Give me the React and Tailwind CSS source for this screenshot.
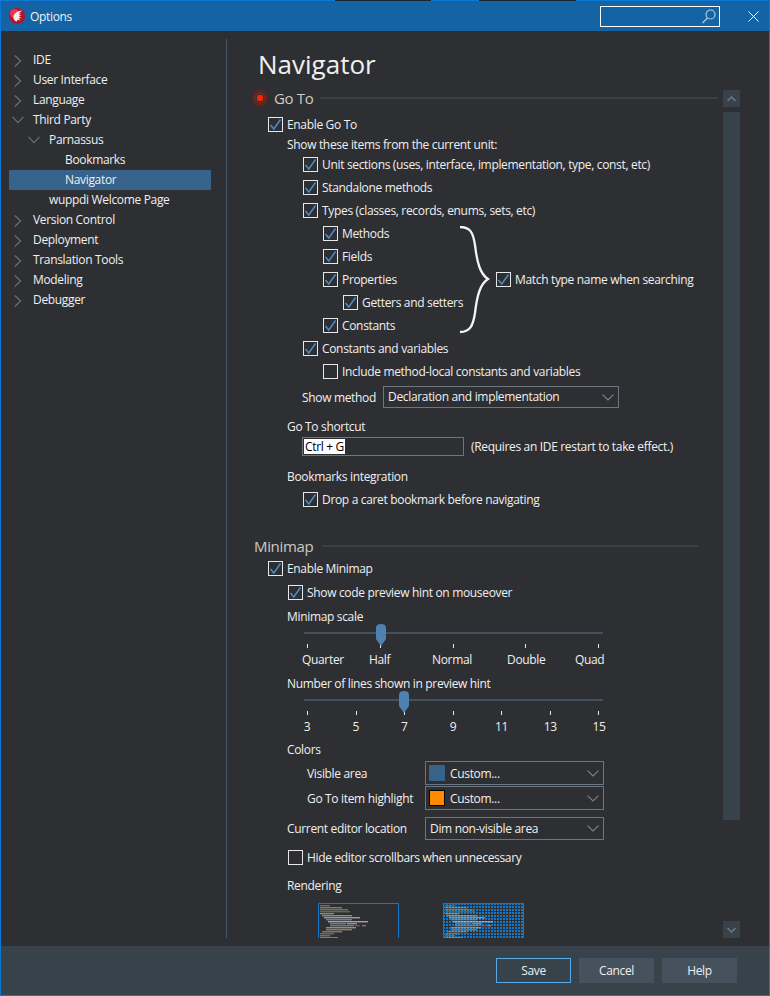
const treeItems = [
  { label: 'IDE', level: 0, arrow: 'right' },
  { label: 'User Interface', level: 0, arrow: 'right' },
  { label: 'Language', level: 0, arrow: 'right' },
  { label: 'Third Party', level: 0, arrow: 'down' },
  { label: 'Parnassus', level: 1, arrow: 'down' },
  { label: 'Bookmarks', level: 2 },
  { label: 'Navigator', level: 2, selected: true },
  { label: 'wuppdi Welcome Page', level: 1 },
  { label: 'Version Control', level: 0, arrow: 'right' },
  { label: 'Deployment', level: 0, arrow: 'right' },
  { label: 'Translation Tools', level: 0, arrow: 'right' },
  { label: 'Modeling', level: 0, arrow: 'right' },
  { label: 'Debugger', level: 0, arrow: 'right' },
];

const levelPad = ['pl-[24px]', 'pl-[40px]', 'pl-[56px]'];
const arrowLeft = ['left-[3px]', 'left-[19px]'];

// x, y, width, colour of the tiny code lines in the two previews
const codeLines = [
  [1, 1, 10, '#8f8f80'], [1, 3, 22, '#a8a898'], [1, 5, 28, '#8f9f6a'], [1, 7, 30, '#7f8f5a'],
  [1, 9, 14, '#b8b8a8'], [3, 11, 30, '#c0c0b0'], [5, 13, 36, '#d6d6d0'], [7, 15, 26, '#7fb0d0'],
  [9, 17, 40, '#e0e0e0'], [11, 19, 16, '#7fb0d0'], [28, 19, 10, '#c8c8c8'], [11, 21, 24, '#b09a80'],
  [36, 21, 5, '#c04a80'], [43, 21, 4, '#a8a8a8'], [7, 23, 30, '#d0c0a0'], [7, 25, 26, '#b8a888'],
  [3, 27, 20, '#a8a898'], [1, 29, 14, '#8f8f80'], [1, 31, 10, '#90a070'], [1, 33, 18, '#a8a898'],
];

function Chevron({ dir, className }) {
  if (dir === 'down') {
    return (
      <svg width="12" height="8" viewBox="0 0 12 8" className={className} fill="none" stroke="#6b6e72" strokeWidth="1.2">
        <path d="M0.5 0.8 L6 6.6 L11.5 0.8" />
      </svg>
    );
  }
  return (
    <svg width="8" height="12" viewBox="0 0 8 12" className={className} fill="none" stroke="#6b6e72" strokeWidth="1.2">
      <path d="M0.8 0.5 L6.6 6 L0.8 11.5" />
    </svg>
  );
}

function TreeRow({ item }) {
  return (
    <div className={`relative flex h-5 items-center ${levelPad[item.level]} ${item.selected ? 'bg-[#36628c]' : ''}`}>
      {item.arrow === 'right' && <Chevron dir="right" className="absolute left-[5px] top-[5px]" />}
      {item.arrow === 'down' && <Chevron dir="down" className={`absolute top-[6px] ${arrowLeft[item.level]}`} />}
      <span>{item.label}</span>
    </div>
  );
}

function Check({ label, checked = true, className = '' }) {
  return (
    <div className={`flex h-[23px] items-start ${className}`}>
      <div className="mt-[4px] flex h-[15px] w-[15px] shrink-0 items-center justify-center border border-[#e8e8e8]">
        {checked && (
          <svg width="13" height="13" viewBox="0 0 13 13" fill="none" stroke="#4f8ec9" strokeWidth="1.4">
            <path d="M1.5 7 L4.8 11 L11.5 1.5" />
          </svg>
        )}
      </div>
      <span className="ml-[4px] mt-[4px] whitespace-nowrap leading-[16px]">{label}</span>
    </div>
  );
}

function Label({ children, className = '' }) {
  return <div className={`h-[18px] pt-px leading-[18px] ${className}`}>{children}</div>;
}

function Combo({ children, className = '' }) {
  return (
    <div className={`flex items-center justify-between border border-[#6b7680] ${className}`}>
      <div className="flex items-center">{children}</div>
      <svg width="12" height="7" viewBox="0 0 12 7" className="mr-[4px]" fill="none" stroke="#7d8186" strokeWidth="1.2">
        <path d="M0.5 0.6 L6 6 L11.5 0.6" />
      </svg>
    </div>
  );
}

function Thumb({ className }) {
  return (
    <svg width="10" height="22" viewBox="0 0 10 22" className={`absolute ${className}`}>
      <path d="M0 4 Q0 0 5 0 Q10 0 10 4 L10 15 L5 22 L0 15 Z" fill="#4f81b0" />
    </svg>
  );
}

function Slider({ thumbClass, ticks }) {
  return (
    <div className="relative ml-[50px] h-[26px] w-[299px] pt-[7px]">
      <div className="h-[2px] w-full bg-[#45525e]" />
      <Thumb className={thumbClass} />
      <div className="mt-[10px] flex justify-between pl-[3px] pr-[4px]">
        {ticks.map(t => <div key={t} className="h-[4px] w-[1px] bg-[#e8e8e8]" />)}
      </div>
    </div>
  );
}

function Heading({ children, className = '' }) {
  return <span className={`whitespace-nowrap text-[15px] leading-5 text-[#cfcac2] ${className}`}>{children}</span>;
}

function ScrollBtn({ dir }) {
  return (
    <div className="flex h-[17px] w-[17px] items-center justify-center bg-[#38424b]">
      <svg width="9" height="6" viewBox="0 0 9 6" fill="none" stroke="#6f7a84" strokeWidth="1.5">
        <path d={dir === 'up' ? 'M0.5 5 L4.5 1 L8.5 5' : 'M0.5 1 L4.5 5 L8.5 1'} />
      </svg>
    </div>
  );
}

function Logo() {
  return (
    <svg width="16" height="16" viewBox="0 0 16 16" className="shrink-0">
      <circle cx="8" cy="8" r="8" fill="#b8122a" />
      <circle cx="5.5" cy="5.5" r="4.5" fill="#e8384e" />
      <path d="M13 2.5 C9 2.8 5.5 5 4.5 8 C4 10.2 5 12.6 7.5 13.8 L8.6 11.8 L11.2 12.4 L9.6 10.2 L12.6 10.2 L9.8 8.6 L12.6 7.6 L9.8 7 L12 5 L9.8 5.4 Z" fill="#f8eaea" />
    </svg>
  );
}

function PreviewA() {
  return (
    <svg width="81" height="35" viewBox="0 0 81 35" className="shrink-0">
      {codeLines.map((l, i) => <rect key={i} x={l[0] + 1} y={l[1] + 1} width={l[2]} height="1.4" fill={l[3]} opacity="0.65" />)}
      <path d="M0.5 35 V0.5 H80.5 V35" fill="none" stroke="#0f78d0" strokeWidth="1" />
    </svg>
  );
}

function PreviewB() {
  return (
    <svg width="81" height="35" viewBox="0 0 81 35" className="shrink-0">
      <defs>
        <pattern id="dots" width="3" height="3" patternUnits="userSpaceOnUse">
          <rect width="2" height="2" fill="#1678c4" />
        </pattern>
      </defs>
      <rect width="81" height="35" fill="url(#dots)" />
      {codeLines.map((l, i) => <rect key={i} x={l[0] + 1} y={l[1] + 1} width={l[2]} height="1.4" fill={l[3]} opacity="0.55" />)}
      <path d="M0.5 35 V0.5 H80.5 V35" fill="none" stroke="#0f78d0" strokeWidth="1" />
    </svg>
  );
}

export default function App() {
  return (
    <div className="flex h-[996px] w-[770px] flex-col overflow-hidden border-x border-b border-[#0a78d4] bg-[#2e2f33] font-['Open_Sans',sans-serif] text-[12px] tracking-[-0.33px] text-[#f0f0f0]">
      {/* top edge of the window, with the darker bits showing through */}
      <div className="flex h-px shrink-0 bg-[#0a78d4]">
        <div className="ml-[334px] w-[96px] bg-[#1c2530]" />
        <div className="ml-[48px] w-[97px] bg-[#1c2530]" />
      </div>

      {/* title bar */}
      <div className="flex h-[30px] shrink-0 items-center bg-[#1464a5]">
        <div className="ml-[8px]"><Logo /></div>
        <span className="ml-[5px] pt-px">Options</span>
        <div className="ml-auto flex h-[21px] w-[120px] items-center justify-end border border-white pr-[3px]">
          <svg width="14" height="15" viewBox="0 0 14 15" fill="none" stroke="#a9cbe6" strokeWidth="1.2">
            <circle cx="8.5" cy="5.5" r="4.5" />
            <path d="M5.5 9 L0.5 14" />
          </svg>
        </div>
        <svg width="11" height="11" viewBox="0 0 11 11" className="ml-[28px] mr-[10px]" fill="none" stroke="#ffffff" strokeWidth="1">
          <path d="M0.5 0.5 L10.5 10.5 M10.5 0.5 L0.5 10.5" />
        </svg>
      </div>

      <div className="flex min-h-0 flex-1">
        {/* options tree */}
        <div className="w-[225px] shrink-0 pl-[8px] pt-[19px]">
          <div className="w-[202px]">
            {treeItems.map(item => <TreeRow key={item.label} item={item} />)}
          </div>
        </div>
        <div className="mb-[8px] mt-[8px] w-[1px] shrink-0 bg-[#46586a]" />

        {/* options page */}
        <div className="mb-[8px] flex min-w-0 flex-1">
          <div className="w-[496px] shrink-0 overflow-hidden pl-[27px] pt-[15px]">
            <div className="ml-[4px] h-[38px] text-[26px] leading-[36px] tracking-normal">Navigator</div>

            <div className="mt-[4px] flex h-5 items-center">
              <svg width="16" height="16" viewBox="0 0 16 16" className="-ml-[2px] shrink-0" fill="none">
                <circle cx="8" cy="8" r="7" stroke="#7c1d14" strokeWidth="1.3" />
                <circle cx="8" cy="8" r="5" stroke="#a52416" strokeWidth="1" />
                <circle cx="8" cy="8" r="3.2" fill="#f0280c" />
              </svg>
              <Heading className="ml-[6px] w-[46px]">Go To</Heading>
              <div className="h-[2px] w-[398px] bg-[#383f47]" />
            </div>

            <Check className="ml-[14px] mt-[5px]" label="Enable Go To" />
            <div className="ml-[33px] h-[17px] pt-px leading-[16px]">Show these items from the current unit:</div>
            <Check className="ml-[49px]" label="Unit sections (uses, interface, implementation, type, const, etc)" />
            <Check className="ml-[49px]" label="Standalone methods" />
            <Check className="ml-[49px]" label="Types (classes, records, enums, sets, etc)" />

            <div className="flex">
              <div className="ml-[69px] w-[137px] shrink-0">
                <Check label="Methods" />
                <Check label="Fields" />
                <Check label="Properties" />
                <Check className="ml-[20px]" label="Getters and setters" />
                <Check label="Constants" />
              </div>
              <svg width="30" height="108" viewBox="0 0 30 108" className="mt-[4px] shrink-0" fill="none" stroke="#f4f4f4" strokeWidth="2.3">
                <path d="M0 1 C10 1 13 6 15 19 C17 36 20 48 28 53 C20 58 17 70 15 87 C13 100 10 106 0 106" />
              </svg>
              <Check className="ml-[6px] mt-[46px]" label="Match type name when searching" />
            </div>

            <Check className="ml-[49px]" label="Constants and variables" />
            <Check className="ml-[69px]" checked={false} label="Include method-local constants and variables" />

            <div className="ml-[48px] mt-[3px] flex h-[22px] items-center">
              <span className="w-[81px] pt-px">Show method</span>
              <Combo className="h-[22px] w-[236px] pl-[4px]">Declaration and implementation</Combo>
            </div>

            <Label className="ml-[33px] mt-[9px]">Go To shortcut</Label>
            <div className="ml-[48px] mt-[2px] flex items-center">
              <div className="flex h-[19px] w-[162px] items-center border border-[#6b7680] pl-[1px]">
                <span className="bg-white px-[1px] leading-[15px] text-black">Ctrl + G</span>
              </div>
              <span className="ml-[7px]">(Requires an IDE restart to take effect.)</span>
            </div>

            <Label className="ml-[33px] mt-[11px]">Bookmarks integration</Label>
            <Check className="ml-[49px] mt-[3px]" label="Drop a caret bookmark before navigating" />

            <div className="mt-[25px] flex h-5 items-center">
              <Heading className="w-[68px]">Minimap</Heading>
              <div className="h-[2px] w-[376px] bg-[#383f47]" />
            </div>
            <Check className="ml-[14px] mt-px" label="Enable Minimap" />
            <Check className="ml-[34px] mt-px" label="Show code preview hint on mouseover" />

            <Label className="ml-[33px] mt-[3px]">Minimap scale</Label>
            <Slider thumbClass="left-[72px] top-[-1px]" ticks={[1, 2, 3, 4, 5]} />
            <div className="ml-[48px] flex h-4 pt-px leading-4">
              <span className="w-[67px]">Quarter</span>
              <span className="w-[63px]">Half</span>
              <span className="w-[75px]">Normal</span>
              <span className="w-[68px]">Double</span>
              <span>Quad</span>
            </div>

            <Label className="ml-[33px] mt-[7px]">Number of lines shown in preview hint</Label>
            <Slider thumbClass="left-[95px] top-[-1px]" ticks={[3, 5, 7, 9, 11, 13, 15]} />
            <div className="ml-[43px] flex h-4 w-[312px] justify-between pt-px leading-4">
              {[3, 5, 7, 9, 11, 13, 15].map(n => <span key={n} className="w-[20px] text-center">{n}</span>)}
            </div>

            <Label className="ml-[33px] mt-[6px]">Colors</Label>
            <div className="ml-[53px] mt-[3px] flex items-center">
              <span className="w-[118px] pt-px">Visible area</span>
              <Combo className="h-[24px] w-[179px] pl-[3px]">
                <div className="mr-[5px] h-4 w-4 bg-[#36628c]" />
                <span className="pt-px">Custom...</span>
              </Combo>
            </div>
            <div className="ml-[53px] mt-px flex items-center">
              <span className="w-[118px] pt-px">Go To item highlight</span>
              <Combo className="h-[24px] w-[179px] pl-[3px]">
                <div className="mr-[5px] h-4 w-4 border border-black bg-[#ff8c00]" />
                <span className="pt-px">Custom...</span>
              </Combo>
            </div>
            <div className="ml-[33px] mt-[7px] flex items-center">
              <span className="w-[138px]">Current editor location</span>
              <Combo className="h-[23px] w-[179px] pl-[4px]">Dim non-visible area</Combo>
            </div>

            <Check className="ml-[34px] mt-[6px]" checked={false} label="Hide editor scrollbars when unnecessary" />
            <Label className="ml-[33px] mt-[7px]">Rendering</Label>
            <div className="ml-[64px] mt-[9px] flex gap-[44px]">
              <PreviewA />
              <PreviewB />
            </div>
          </div>

          {/* scrollbar */}
          <div className="flex w-[17px] shrink-0 flex-col pt-[59px]">
            <ScrollBtn dir="up" />
            <div className="mt-[5px] h-[708px] bg-[#38424b]" />
            <div className="mt-auto"><ScrollBtn dir="down" /></div>
          </div>
        </div>
      </div>

      {/* footer */}
      <div className="flex h-[49px] shrink-0 items-start justify-end gap-[8px] bg-[#38424b] pr-[32px] pt-[12px]">
        <button className="h-[25px] w-[75px] border border-[#5aa9e6] bg-[#38424b]">Save</button>
        <button className="h-[25px] w-[75px] bg-[#45525e]">Cancel</button>
        <button className="h-[25px] w-[75px] bg-[#45525e]">Help</button>
      </div>
    </div>
  );
}
